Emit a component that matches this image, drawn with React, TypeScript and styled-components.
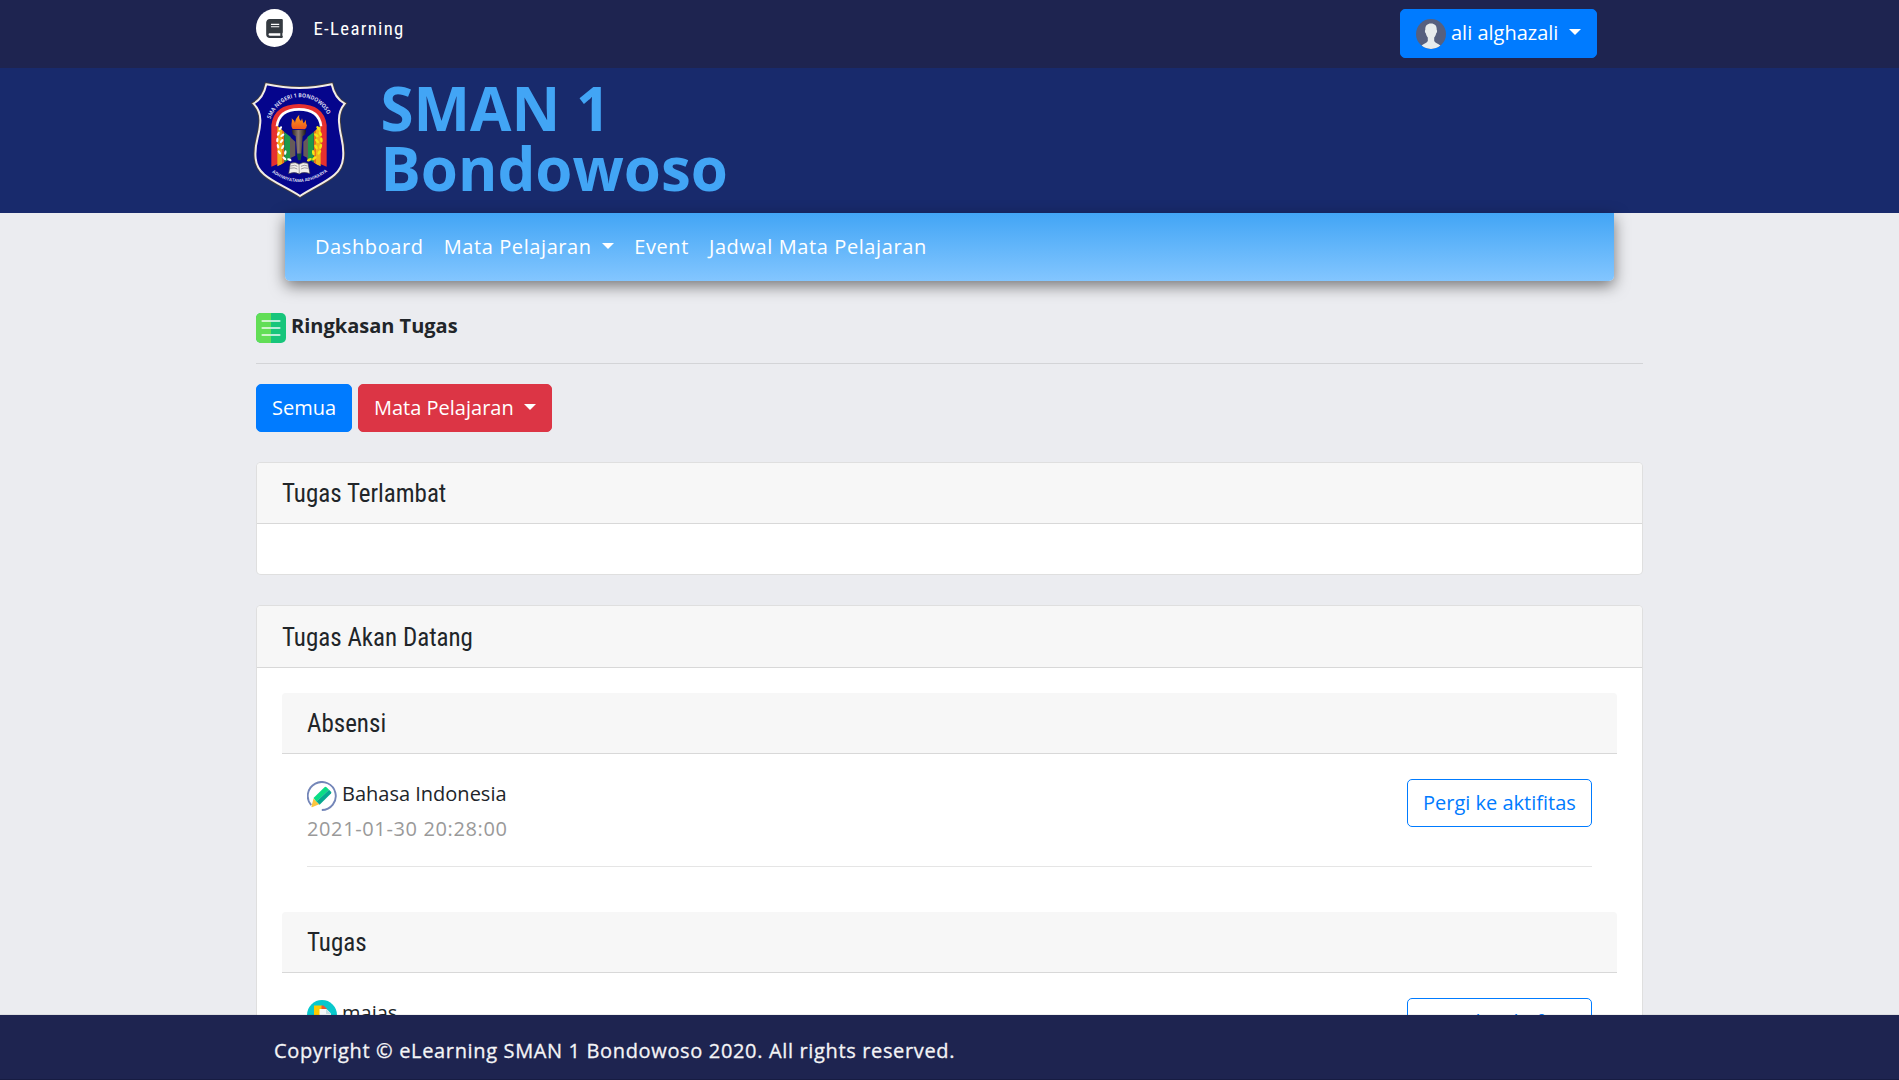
import React from "react";
import styled, { createGlobalStyle } from "styled-components";
import { FaBook } from "react-icons/fa";

const GlobalStyle = createGlobalStyle`
  *, *::before, *::after { box-sizing: border-box; }
  body {
    margin: 0;
    font: 400 20px/30px "Open Sans", sans-serif;
    color: #212529;
    background: #ebecf0;
    overflow: hidden;
  }
  h1, h2, p { margin: 0; }
  button { font: inherit; margin: 0; cursor: pointer; }
  svg { display: block; flex: none; }
`;

const Page = styled.div`
  display: flex;
  flex-direction: column;
  height: 100vh;
  overflow: hidden;
`;

const Container = styled.div`
  display: flex;
  align-items: flex-start;
  width: 1387px;
  margin: 0 auto;
`;

const TopBar = styled.header`
  flex: none;
  height: 68px;
  padding-top: 9px;
  background: #1e2450;
`;

const BrandBadge = styled.span`
  display: flex;
  align-items: center;
  justify-content: center;
  width: 37px;
  height: 38px;
  border-radius: 50%;
  background: #fff;
  color: #343a40;
  font-size: 19px;
`;

const BrandName = styled.span`
  margin: 5.5px 0 0 20.5px;
  font: 400 18.75px/28px "Roboto Condensed", sans-serif;
  letter-spacing: 1.3px;
  color: #fff;
`;

const Caret = styled.span`
  display: inline-block;
  margin-left: 10.5px;
  vertical-align: 5px;
  border-top: 6px solid;
  border-left: 6px solid transparent;
  border-right: 6px solid transparent;
`;

const variants = {
  primary: "color:#fff;background:#007bff;border-color:#007bff;",
  danger: "color:#fff;background:#dc3545;border-color:#dc3545;",
  outline: "color:#007bff;background:transparent;border-color:#007bff;",
};

const Button = styled.button<{ $variant: keyof typeof variants; $width: number }>`
  flex: none;
  width: ${(p) => p.$width}px;
  height: 48px;
  padding: 7.5px 0 8.5px 15px;
  border: 1px solid;
  border-radius: 5px;
  text-align: left;
  white-space: nowrap;
  ${(p) => variants[p.$variant]}
`;

const UserButton = styled(Button)`
  display: flex;
  align-items: flex-start;
  gap: 5px;
  height: 49px;
  margin: 0 46px 0 auto;

  svg { margin-top: 1.5px; }
  ${Caret} { margin-left: 11px; }
`;

const Hero = styled.section`
  flex: none;
  height: 145px;
  padding-top: 7px;
  background: #182a6c;
`;

const CrestSlot = styled.div`
  margin-left: -6px;
`;

const SchoolName = styled.h1`
  width: 400px;
  margin: 3px 0 0 30.5px;
  font-size: 60px;
  line-height: 60px;
  font-weight: 700;
  color: #42a5f5;
`;

const NavBar = styled.nav`
  position: relative;
  flex: none;
  display: flex;
  gap: 20px;
  width: 1329px;
  height: 68px;
  margin: 0 auto;
  padding: 19px 30px;
  border-radius: 0 0 5px 5px;
  background: linear-gradient(#42a5f5, #83c6ff);
  box-shadow: 0 5px 15px rgba(0, 0, 0, 0.5);
`;

const NavLink = styled.a`
  color: #fff;
  letter-spacing: 0.6px;
  white-space: nowrap;
`;

const Main = styled.main`
  flex: 1;
  min-height: 0;
  width: 1387px;
  margin: 0 auto;
  overflow: hidden;
  padding-top: 29px;
`;

const Heading = styled.div`
  display: flex;
  align-items: flex-start;
  gap: 5px;
  height: 54px;
  margin-bottom: 20px;
  border-bottom: 1px solid rgba(0, 0, 0, 0.1);

  svg { margin-top: 3px; }
`;

const HeadingText = styled.h2`
  margin-top: 1px;
  font-size: 20px;
  font-weight: 700;
`;

const Filters = styled.div`
  display: flex;
  gap: 6px;
  margin-bottom: 30px;
`;

const Card = styled.section`
  margin-bottom: 30px;
  border: 1px solid rgba(0, 0, 0, 0.125);
  border-radius: 5px;
  background: #fff;
`;

const CardHeader = styled.h2<{ $height?: number }>`
  height: ${(p) => p.$height ?? 61}px;
  padding: ${(p) => (p.$height ? 17 : 16)}px 25px 0;
  border-bottom: 1px solid rgba(0, 0, 0, 0.125);
  border-radius: 4px 4px 0 0;
  background: #f7f7f7;
  font: 400 25px/30px "Roboto Condensed", sans-serif;
`;

const CardBody = styled.div`
  padding: 25px;
`;

const Activity = styled.article`
  display: flex;
  justify-content: space-between;
  align-items: flex-start;
  height: 88px;
  margin: 25px 25px 45px;
  border-bottom: 1px solid rgba(0, 0, 0, 0.1);
`;

const ActivityTitle = styled.p`
  display: flex;
  align-items: flex-start;
  gap: 5px;
  height: 35px;

  svg { margin-top: 2px; }
`;

const DueDate = styled.p`
  color: #999;
  letter-spacing: 0.625px;
`;

const Footer = styled.footer`
  position: relative;
  flex: none;
  height: 65px;
  padding: 21px 0 0 274px;
  background: #1e2450;
  border-bottom: 1px solid #171c42;
  box-shadow: 0 -1px 0 rgba(0, 0, 0, 0.06);
  color: #f4f4f6;
  letter-spacing: 0.65px;
  -webkit-text-stroke: 0.3px #f4f4f6;
`;

function Crest() {
  const shield =
    "M49 28 Q150 50 245 28 Q254 70 284 86 Q262 112 268 150 C270 185 284 205 279 250 C274 306 218 320 150 363 C82 320 22 306 17 250 C12 205 28 185 30 150 Q36 112 11 86 Q40 70 49 28Z";
  const leaves = [[88, 232, -35], [84, 214, -15], [82, 195, 5], [85, 176, 25], [91, 160, 40], [103, 250, -50], [98, 216, 30], [95, 198, 40], [97, 181, 55], [118, 254, -65], [106, 233, 10]];
  return (
    <svg width="100" height="130" viewBox="0 0 300 390">
      <defs>
        <path id="arcTop" d="M62 132 A92 92 0 0 1 238 132" />
        <path id="arcBottom" d="M66 292 Q146 350 229 292" />
        <linearGradient id="flame" x1="0" y1="0" x2="0" y2="1">
          <stop offset="0" stopColor="#f9a51a" />
          <stop offset="1" stopColor="#f0541e" />
        </linearGradient>
        <linearGradient id="torch">
          <stop offset="0" stopColor="#2b2422" />
          <stop offset=".45" stopColor="#8b7a72" />
          <stop offset="1" stopColor="#1d1817" />
        </linearGradient>
      </defs>
      <path d={shield} fill="#05058c" stroke="#4a4039" strokeWidth="11" />
      <path d={shield} fill="#05058c" stroke="#f1ece7" strokeWidth="6" />
      <text fontFamily="Open Sans, sans-serif" fontSize="17" fontWeight="700" fill="#d9d9ef">
        <textPath href="#arcTop" textLength="220" lengthAdjust="spacingAndGlyphs">SMA NEGERI 1 BONDOWOSO</textPath>
      </text>
      <path d="M64 275 V150 Q72 88 147 87 Q222 88 230 150 V275 L147 240Z" fill="#e6302f" />
      <path d="M77 154 Q82 100 147 99 Q212 100 217 154Z" fill="#fff" />
      <path d="M84 156 Q90 107 147 107 Q204 107 210 156 L210 250 H84Z" fill="#05058c" />
      <path d="M82 152 L96 164 V268 L82 274Z M212 152 L198 164 V268 L212 274Z" fill="#f0b51c" />
      <path d="M96 164 L103 171 V263 L96 268Z M198 164 L191 171 V263 L198 268Z" fill="#e8731c" />
      <path d="M103 171 L122 186 V252 L103 262Z M191 171 L172 186 V252 L191 262Z" fill="#1d9a4a" />
      <path d="M120 186 L136 200 V242 L120 250Z M174 186 L160 200 V242 L174 250Z" fill="#665a58" />
      <path d="M82 276 L147 238 L212 276 L196 286 H100Z" fill="#05058c" />
      <g fill="#fff">
        {leaves.map(([x, y, r], i) => (
          <ellipse key={i} cx={x} cy={y} rx="3.500" ry="7" transform={`rotate(${r} ${x} ${y})`} />
        ))}
      </g>
      <g fill="#f5e616" transform="translate(296 0) scale(-1 1)">
        {leaves.map(([x, y, r], i) => (
          <ellipse key={i} cx={x} cy={y} rx="4" ry="8" transform={`rotate(${r} ${x} ${y})`} />
        ))}
      </g>
      <path d="M126 165 H168 L166 178 L158 184 L154 236 H141 L137 184 L128 178Z" fill="url(#torch)" />
      <path d="M128 162 C120 150 128 142 125 130 Q134 137 135 144 Q136 130 148 119 Q145 130 153 138 L156 130 Q158 139 161 145 L168 134 Q167 147 171 150 Q170 160 164 163Z" fill="url(#flame)" />
      <path d="M140 236 h15 l-3 20 h-8z" fill="#174f38" />
      <path d="M121 265 Q137 259 147 268 Q158 259 174 265 L180 296 Q160 289 148 297 Q134 289 116 296Z" fill="#f1efeb" stroke="#3e3a44" strokeWidth="2" />
      <path d="M147 268 L148 297 M122 273 Q136 268 142 274 M120 280 Q134 276 142 282 M173 273 Q162 268 153 274 M175 280 Q162 276 153 282" fill="none" stroke="#77737c" strokeWidth="2" />
      <text fontFamily="Open Sans, sans-serif" fontSize="13" fontWeight="700" fill="#d9d9ef">
        <textPath href="#arcBottom" textLength="180" lengthAdjust="spacingAndGlyphs">ADHIWIYATAMA ADHIKARYA</textPath>
      </text>
    </svg>
  );
}

const Avatar = () => (
  <svg width="30" height="30" viewBox="0 0 30 30">
    <circle cx="15" cy="15" r="15" fill="#56607f" />
    <path d="M15 4.5c-4 0-6 2.5-5.7 6.500-.8.4-.2 3 .6 3.500.3 2 1.100 3 1.900 3.900v3.600C11 24 8 24.300 5.600 26.600A15 15 0 0 0 24.400 26.600C22 24.300 19 24 18.200 22v-3.600c.8-.9 1.600-1.900 1.900-3.900.8-.5 1.400-3.100.6-3.500C21 7 19 4.500 15 4.500z" fill="#e7eced" />
  </svg>
);

const ListIcon = () => (
  <svg width="30" height="30" viewBox="0 0 30 30">
    <rect width="30" height="30" rx="5" fill="#17c57b" />
    <path d="M15 0H5a5 5 0 0 0-5 5v20a5 5 0 0 0 5 5h10z" fill="#62de56" />
    <path d="M6.500 8h9M6.500 15h9M6.500 22h9" stroke="#cff5cb" strokeWidth="2.200" strokeLinecap="round" />
    <path d="M15 8h8.500M15 15h8.500M15 22h8.500" stroke="#b9ecd9" strokeWidth="2.200" strokeLinecap="round" />
  </svg>
);

const PencilIcon = () => (
  <svg width="30" height="30" viewBox="0 0 30 30">
    <path d="M4.200 24.200A14 14 0 1 1 14.800 29" fill="none" stroke="#7486b8" strokeWidth="1.900" />
    <path d="M6.500 17.500 L12.200 23.300 L5 26.200 Q4.300 26.300 4.500 25.300Z" fill="#fbc540" />
    <path d="M6.500 17 L17.500 6.200 Q18.500 5.300 19.500 6.200 L22 8.700 L9.500 20.700Z" fill="#0bdc85" />
    <path d="M22 8.700 L24 10.700 Q24.800 11.700 24 12.600 L12.600 23.800 L9.500 20.500Z" fill="#07a890" />
  </svg>
);

const DocumentIcon = () => (
  <svg width="30" height="30" viewBox="0 0 30 30">
    <circle cx="15" cy="15" r="15" fill="#08c8cc" />
    <path d="M7 5.500h8v19H7z" fill="#fdca00" />
    <path d="M14.500 5.500h2l4 4h-6z" fill="#f2552c" />
    <path d="M12.500 9h7l4.500 4.500V25H12.500z" fill="#f4f8fa" />
    <path d="M19 9l5 5h-5z" fill="#c8dce2" />
  </svg>
);

function ActivityItem({ icon, title, due }: { icon: React.ReactNode; title: string; due?: string }) {
  return (
    <Activity>
      <div>
        <ActivityTitle>{icon}{title}</ActivityTitle>
        {due && <DueDate>{due}</DueDate>}
      </div>
      <Button $variant="outline" $width={185}>Pergi ke aktifitas</Button>
    </Activity>
  );
}

export default function App() {
  return (
    <Page>
      <GlobalStyle />
      <TopBar>
        <Container>
          <BrandBadge><FaBook /></BrandBadge>
          <BrandName>E-Learning</BrandName>
          <UserButton $variant="primary" $width={197}>
            <Avatar />
            <span>ali alghazali<Caret /></span>
          </UserButton>
        </Container>
      </TopBar>
      <Hero>
        <Container>
          <CrestSlot><Crest /></CrestSlot>
          <SchoolName>SMAN 1 Bondowoso</SchoolName>
        </Container>
      </Hero>
      <NavBar>
        <NavLink>Dashboard</NavLink>
        <NavLink>Mata Pelajaran<Caret /></NavLink>
        <NavLink>Event</NavLink>
        <NavLink>Jadwal Mata Pelajaran</NavLink>
      </NavBar>
      <Main>
        <Heading>
          <ListIcon />
          <HeadingText>Ringkasan Tugas</HeadingText>
        </Heading>
        <Filters>
          <Button $variant="primary" $width={96}>Semua</Button>
          <Button $variant="danger" $width={194}>Mata Pelajaran<Caret /></Button>
        </Filters>
        <Card>
          <CardHeader>Tugas Terlambat</CardHeader>
          <CardBody />
        </Card>
        <Card>
          <CardHeader $height={62}>Tugas Akan Datang</CardHeader>
          <CardBody>
            <CardHeader>Absensi</CardHeader>
            <ActivityItem icon={<PencilIcon />} title="Bahasa Indonesia" due="2021-01-30 20:28:00" />
            <CardHeader>Tugas</CardHeader>
            <ActivityItem icon={<DocumentIcon />} title="majas" />
          </CardBody>
        </Card>
      </Main>
      <Footer>Copyright © eLearning SMAN 1 Bondowoso 2020. All rights reserved.</Footer>
    </Page>
  );
}
